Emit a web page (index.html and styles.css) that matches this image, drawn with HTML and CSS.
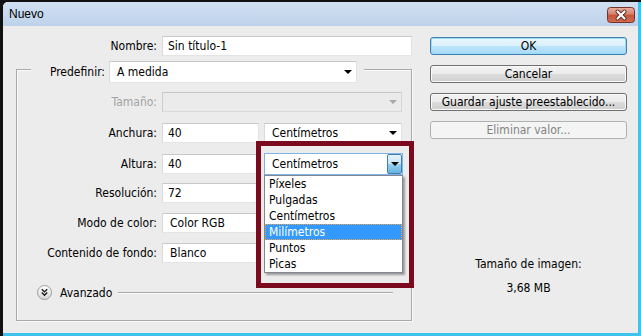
FILE: index.html
```html
<!DOCTYPE html>
<html>
<head>
    <meta charset="UTF-8">
    <title>Nuevo</title>
    <link rel="stylesheet" href="styles.css">
</head>
<body>

<div class="win">

    <div class="title">
        <span class="title-text">Nuevo</span>
        <span class="close">
            <svg width="28" height="16" viewBox="0 0 28 16">
                <defs>
                    <linearGradient id="cg" x1="0" y1="0" x2="0" y2="1">
                        <stop offset="0" stop-color="#eab0a2"/>
                        <stop offset=".45" stop-color="#d5806c"/>
                        <stop offset=".5" stop-color="#c4533a"/>
                        <stop offset="1" stop-color="#d36d52"/>
                    </linearGradient>
                </defs>
                <rect x=".5" y=".5" width="27" height="15" rx="3" fill="url(#cg)" stroke="#74332a"/>
                <path d="M10.5 4.5 L17.5 11.5 M17.5 4.5 L10.5 11.5" stroke="#5a2a22" stroke-width="4" stroke-linecap="round"/>
                <path d="M10.5 4.5 L17.5 11.5 M17.5 4.5 L10.5 11.5" stroke="#fff" stroke-width="2.2" stroke-linecap="round"/>
            </svg>
        </span>
    </div>

    <div class="client">

        <div class="left">

            <div class="row-name">
                <label class="lbl">Nombre:</label>
                <div class="field">Sin título-1</div>
            </div>

            <div class="group">

                <div class="group-head">
                    <label class="lbl head-lbl">Predefinir:</label>
                    <div class="field sel head-sel">A medida<i class="arrow"></i></div>
                </div>

                <div class="grow grow-size">
                    <label class="lbl off">Tamaño:</label>
                    <div class="field sel span2 sel-off"><i class="arrow"></i></div>
                </div>

                <div class="grow grow-w">
                    <label class="lbl">Anchura:</label>
                    <div class="field">40</div>
                    <div class="field sel">Centímetros<i class="arrow"></i></div>
                </div>

                <div class="grow">
                    <label class="lbl">Altura:</label>
                    <div class="field">40</div>
                    <div class="unit-open">
                        <div class="mark"></div>
                        <div class="field sel sel-open">Centímetros<span class="drop-btn"><i class="arrow"></i></span></div>
                        <ul class="droplist">
                            <li>Píxeles</li>
                            <li>Pulgadas</li>
                            <li>Centímetros</li>
                            <li class="hl">Milímetros</li>
                            <li>Puntos</li>
                            <li>Picas</li>
                        </ul>
                    </div>
                </div>

                <!-- the unit selects of the next rows sit under the open list -->
                <div class="grow">
                    <label class="lbl">Resolución:</label>
                    <div class="field">72</div>
                    <div class="field sel"><i class="arrow"></i></div>
                </div>

                <div class="grow grow-mode">
                    <label class="lbl">Modo de color:</label>
                    <div class="field sel">Color RGB<i class="arrow"></i></div>
                    <div class="field sel"><i class="arrow"></i></div>
                </div>

                <div class="grow">
                    <label class="lbl">Contenido de fondo:</label>
                    <div class="field sel span2">Blanco<i class="arrow"></i></div>
                </div>

                <div class="adv">
                    <svg width="15" height="15" viewBox="0 0 15 15">
                        <defs>
                            <linearGradient id="ag" x1="0" y1="0" x2="0" y2="1">
                                <stop offset="0" stop-color="#ffffff"/>
                                <stop offset="1" stop-color="#d6d6d6"/>
                            </linearGradient>
                        </defs>
                        <circle cx="7.5" cy="7.5" r="7" fill="url(#ag)" stroke="#9c9c9c"/>
                        <path d="M4.8 4.3l2.7 2.6 2.7-2.6M4.8 7.6l2.7 2.6 2.7-2.6" fill="none" stroke="#1a1a1a" stroke-width="1.4"/>
                    </svg>
                    <span class="adv-text">Avanzado</span>
                    <span class="adv-line"></span>
                </div>

            </div>

        </div>

        <div class="right">
            <div class="btn btn-ok">OK</div>
            <div class="btn">Cancelar</div>
            <div class="btn">Guardar ajuste preestablecido...</div>
            <div class="btn btn-off">Eliminar valor...</div>

            <p class="info info-1">Tamaño de imagen:</p>
            <p class="info info-2">3,68 MB</p>
        </div>

    </div>

</div>

</body>
</html>
```

FILE: styles.css
```css
* {
    margin: 0;
    padding: 0;
    box-sizing: border-box;
}

ul {
    list-style: none;
}

body {
    font: 12px/16px "DejaVu Sans Condensed", "DejaVu Sans", sans-serif;
    font-stretch: condensed;
    color: #000;
    background: #111;
}

/* window frame */

.win {
    margin: 2px 0 0 3px;
    width: 638px;
    height: 334px;
    background: #ececec;
    border-right: 3px solid #3ec3ec;
    border-bottom: 3px solid #3ec3ec;
    border-top-left-radius: 5px;
    overflow: hidden;
}

.title {
    display: flex;
    align-items: center;
    height: 24px;
    padding: 0 3px 0 6px;
    background: linear-gradient(#d0e0f2, #bdd2ea);
}

.title-text {
    font: 12px "Liberation Sans", sans-serif;
}

.close {
    display: flex;
    margin: 2px 0 0 auto;
}

.client {
    display: flex;
    padding: 10px 11px 0 13px;
}

.left {
    width: 396px;
}

.right {
    display: flex;
    flex-direction: column;
    width: 197px;
    margin-left: 18px;
}

/* fields */

.lbl {
    text-align: right;
    white-space: nowrap;
}

.lbl.off {
    color: #a3a3a3;
}

.field {
    height: 20px;
    padding-left: 5px;
    line-height: 18px;
    background: #fff;
    border: 1px solid;
    border-color: #c9c9c9 #e2e2e2 #e4e4e4 #dadada;
    white-space: nowrap;
    overflow: hidden;
}

.sel {
    display: flex;
    align-items: center;
    padding-left: 7px;
}

.arrow {
    margin: 0 4px 0 auto;
    border-style: solid;
    border-width: 4px 4px 0;
    border-color: #000 transparent transparent;
}

.sel-off {
    background: #ebebeb;
    border-color: #c6c6c6 #d6d6d6 #d8d8d8 #cccccc;
}

.sel-off .arrow {
    border-top-color: #a8a8a8;
}

.row-name {
    display: grid;
    grid-template-columns: 141px 250px;
    column-gap: 5px;
    align-items: center;
    height: 20px;
}

/* group box */

.group {
    height: 252px;
    margin-top: 13px;
    border: 1px solid #a9a9a9;
    box-shadow: inset 1px 1px 0 #fbfbfb, 1px 1px 0 #fbfbfb;
}

.group-head {
    display: flex;
    align-items: center;
    width: fit-content;
    margin: -9px 0 0 14px;
    padding-right: 7px;
    background: #ececec;
}

.head-lbl {
    width: 74px;
}

.head-sel {
    width: 248px;
    height: 22px;
    margin-left: 4px;
    line-height: 20px;
}

.grow {
    display: grid;
    grid-template-columns: 140px 97px 138px;
    column-gap: 5px;
    align-items: center;
    height: 20px;
    margin-top: 10px;
}

.grow-size {
    margin-top: 9px;
}

.grow-w {
    margin-top: 11px;
}

.grow-mode {
    grid-template-columns: 140px 140px 95px;
}

.span2 {
    grid-column: span 2;
}

/* open unit list */

.unit-open {
    position: relative;
    z-index: 2;
    width: 139px;
    height: 22px;
}

.mark {
    position: absolute;
    left: -8px;
    top: -12px;
    z-index: -1;
    width: 158px;
    height: 147px;
    border: 5px solid #7c0a1f;
    background: #ececec;
}

.sel-open {
    height: 22px;
    line-height: 20px;
    border-color: #7eb4ea;
}

.drop-btn {
    display: flex;
    align-items: center;
    justify-content: center;
    width: 15px;
    height: 20px;
    margin-left: auto;
    border: 1px solid #3c7fb1;
    border-radius: 2px;
    background: linear-gradient(#e5f4fc, #c4e5f6 50%, #98d1ef 50%, #68b3db);
}

.drop-btn .arrow {
    margin: 0;
}

.droplist {
    position: absolute;
    top: 22px;
    left: 0;
    width: 139px;
    background: #fff;
    border: 1px solid #828790;
    box-shadow: 2px 2px 2px rgba(0, 0, 0, .35);
}

.droplist li {
    height: 16px;
    padding-left: 4px;
    line-height: 16px;
}

.droplist li.hl {
    color: #fff;
    background: #3399ff;
    outline: 1px dotted #f0a54c;
    outline-offset: -1px;
}

/* advanced */

.adv {
    display: flex;
    align-items: center;
    height: 15px;
    margin-top: 22px;
    padding-left: 20px;
}

.adv-text {
    margin-left: 8px;
}

.adv-line {
    flex: 1;
    height: 2px;
    margin: 1px 18px 0 6px;
    border-top: 1px solid #a9a9a9;
    border-bottom: 1px solid #fbfbfb;
}

/* buttons */

.btn {
    height: 18px;
    margin-top: 10px;
    line-height: 16px;
    text-align: center;
    border: 1px solid #707070;
    border-radius: 3px;
    background: linear-gradient(#f2f2f2, #ebebeb 50%, #dddddd 50%, #cfcfcf);
    box-shadow: inset 0 0 0 1px #fafafa;
}

.btn-ok {
    margin-top: 1px;
    border-color: #3c7fb1;
    background: linear-gradient(#eaf6fd, #d9f0fc 50%, #bee6fd 50%, #a7d9f5);
    box-shadow: inset 0 0 0 1px #9edaf6;
}

.btn-off {
    color: #838383;
    border-color: #adb2b5;
    background: #f4f4f4;
    box-shadow: none;
}

.info {
    text-align: center;
}

.info-1 {
    margin-top: 117px;
}

.info-2 {
    margin-top: 8px;
}
```
